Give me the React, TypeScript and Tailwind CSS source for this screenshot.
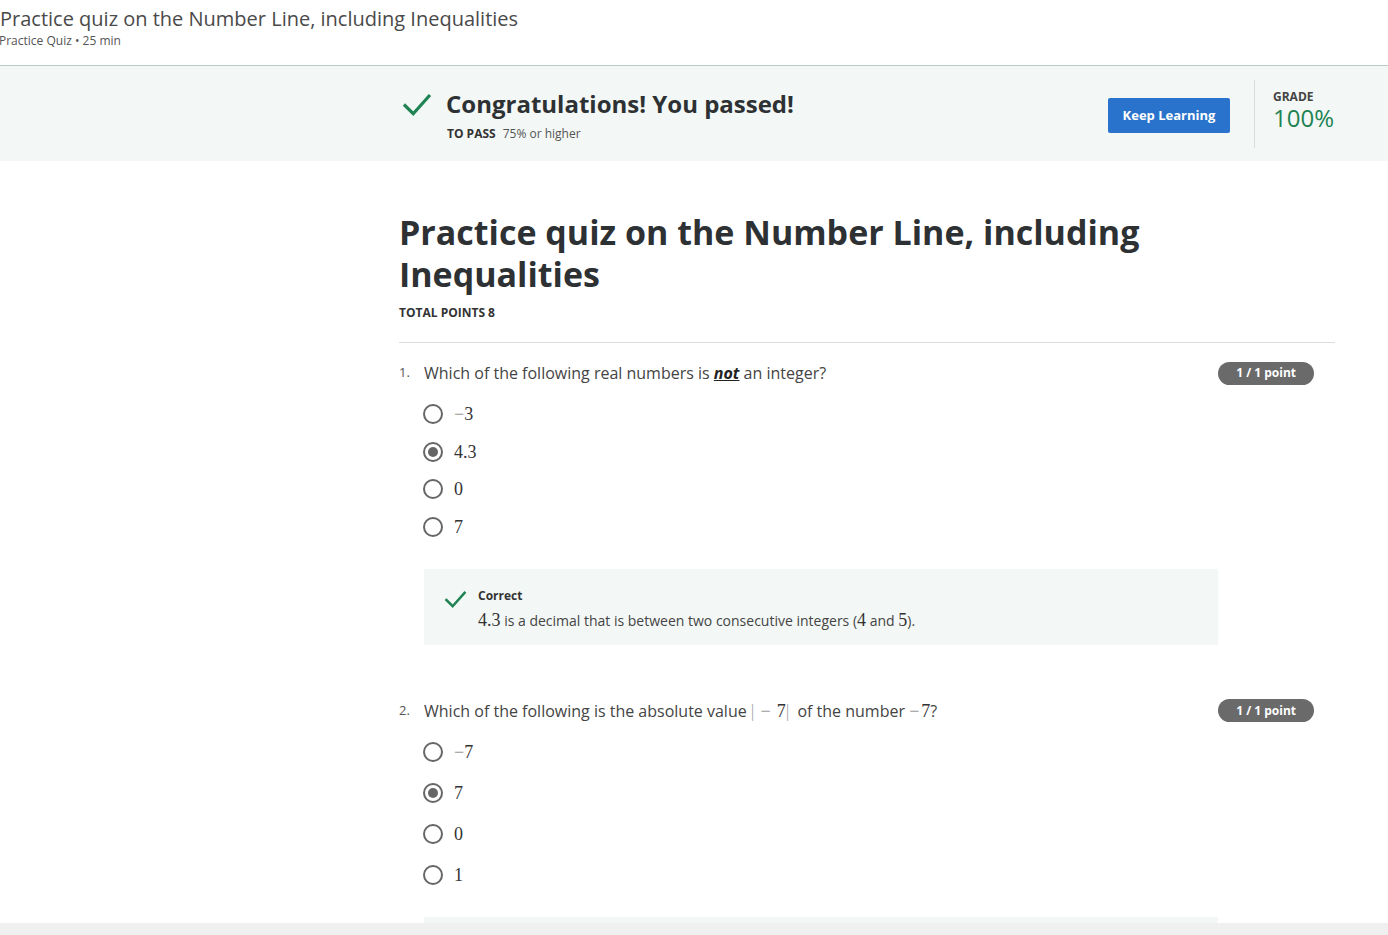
import type { ReactNode } from "react";

const sans = { fontFamily: '"Open Sans", "Noto Sans", sans-serif' };
const serif = { fontFamily: '"Liberation Serif", "DejaVu Serif", serif' };

function Check({ className }: { className?: string }) {
  return (
    <svg viewBox="0 0 24 24" className={className} fill="none">
      <path d="M2.5 12.5 L9 19 L21.5 5" stroke="#1f8354" strokeWidth="2.6" strokeLinecap="square" />
    </svg>
  );
}

function Radio({ checked }: { checked?: boolean }) {
  return (
    <span className="w-5 h-5 rounded-full border-2 border-[#666] flex items-center justify-center shrink-0 bg-white">
      {checked && <span className="w-[10px] h-[10px] rounded-full bg-[#666]" />}
    </span>
  );
}

function M({ children }: { children: ReactNode }) {
  return (
    <span style={serif} className="text-[18px] leading-5 text-[#333]">
      {children}
    </span>
  );
}

function Minus() {
  return <span className="text-[#999]">−</span>;
}

function Badge() {
  return (
    <span className="h-[23px] px-[18px] rounded-full bg-[#6a6a6a] text-white text-[12px] font-bold flex items-center">
      1 / 1 point
    </span>
  );
}

function Options({ items, selected, gap }: { items: ReactNode[]; selected: number; gap: string }) {
  return (
    <div className={`flex flex-col pl-[24px] ${gap}`}>
      {items.map((it, i) => (
        <div key={i} className="flex items-center gap-[11px] h-5">
          <Radio checked={i === selected} />
          <M>{it}</M>
        </div>
      ))}
    </div>
  );
}

export default function App() {
  return (
    <div style={sans} className="h-[935px] overflow-hidden flex flex-col bg-white text-[#373a3c]">
      <div className="flex-1 overflow-hidden">
        {/* top header */}
        <div className="h-[66px] border-b border-[#b9cbc3] pt-[5px]">
          <div className="text-[20px] leading-7 text-[#4a4a4a]">
            Practice quiz on the Number Line, including Inequalities
          </div>
          <div className="text-[12px] leading-4 text-[#555] -ml-[1px]">Practice Quiz • 25 min</div>
        </div>

        {/* pass banner */}
        <div className="h-[95px] bg-[#f3f8f6]">
          <div className="w-[936px] ml-[399px] flex h-full">
            <div className="flex-1 flex pt-[22px]">
              <Check className="w-[30px] h-[30px] ml-[3px] mt-[2px]" />
              <div className="ml-[14px]">
                <div className="text-[24px] leading-8 font-bold text-[#2e3133]">Congratulations! You passed!</div>
                <div className="text-[12px] leading-4 mt-[6px] ml-[1px] flex gap-[7px]">
                  <span className="font-bold text-[#333]">TO PASS</span>
                  <span className="text-[#555]">75% or higher</span>
                </div>
              </div>
            </div>
            <div className="pt-[32px] pr-[24px]">
              <button className="h-[35px] w-[122px] rounded-[2px] bg-[#2a73cc] text-white text-[13px] font-bold">
                Keep Learning
              </button>
            </div>
            <div className="mt-[14px] h-[68px] border-l border-[#dcdcdc] pl-[18px] w-[81px]">
              <div className="text-[12px] leading-[14px] font-bold text-[#444] mt-[10px]">GRADE</div>
              <div className="text-[24px] leading-7 text-[#1f8354]">100%</div>
            </div>
          </div>
        </div>

        {/* main content */}
        <div className="w-[936px] ml-[399px]">
          <h1 className="text-[34px] leading-[42px] font-bold text-[#2e3133] mt-[50px]">
            Practice quiz on the Number Line, including Inequalities
          </h1>
          <div className="text-[12px] leading-4 font-bold text-[#333] mt-[10px]">TOTAL POINTS 8</div>
          <div className="border-b border-[#dcdcdc] mt-[21px]" />

          {/* question 1 */}
          <div className="mt-[18px] flex items-center pr-[21px]">
            <span className="w-[25px] text-[13px] text-[#555]">1.</span>
            <span className="flex-1 text-[16px] leading-6 text-[#444]">
              Which of the following real numbers is{" "}
              <em className="font-bold underline text-[#222]">not</em> an integer?
            </span>
            <Badge />
          </div>
          <div className="mt-[19px]">
            <Options
              items={[<><Minus />3</>, "4.3", "0", "7"]}
              selected={1}
              gap="gap-[17.5px]"
            />
          </div>
          <div className="ml-[25px] w-[794px] h-[76px] mt-[32px] bg-[#f3f8f6] flex pt-[19px] pl-[20px]">
            <Check className="w-[23px] h-[23px]" />
            <div className="ml-[11px]">
              <div className="text-[12px] leading-4 font-bold text-[#333]">Correct</div>
              <div className="text-[14px] leading-5 text-[#444] mt-[6px]">
                <M>4.3</M> is a decimal that is between two consecutive integers (<M>4</M> and <M>5</M>).
              </div>
            </div>
          </div>

          {/* question 2 */}
          <div className="mt-[54px] flex items-center pr-[21px]">
            <span className="w-[25px] text-[13px] text-[#555]">2.</span>
            <span className="flex-1 text-[16px] leading-6 text-[#444]">
              Which of the following is the absolute value{" "}
              <M>
                <span className="text-[#aaa]">|</span>
                <span className="inline-block mx-[6px]">
                  <Minus />
                </span>
                7<span className="text-[#aaa] mr-[4px]">|</span>
              </M>{" "}
              of the number{" "}
              <M>
                <Minus />
                <span className="ml-[2px]">7</span>
              </M>
              ?
            </span>
            <Badge />
          </div>
          <div className="mt-[19px]">
            <Options
              items={[<><Minus />7</>, "7", "0", "1"]}
              selected={1}
              gap="gap-[21px]"
            />
          </div>
          <div className="ml-[25px] w-[794px] h-[76px] mt-[32px] bg-[#f3f8f6]" />
        </div>
      </div>
      <div className="h-[12px] bg-[#f0f0f0]" />
    </div>
  );
}
